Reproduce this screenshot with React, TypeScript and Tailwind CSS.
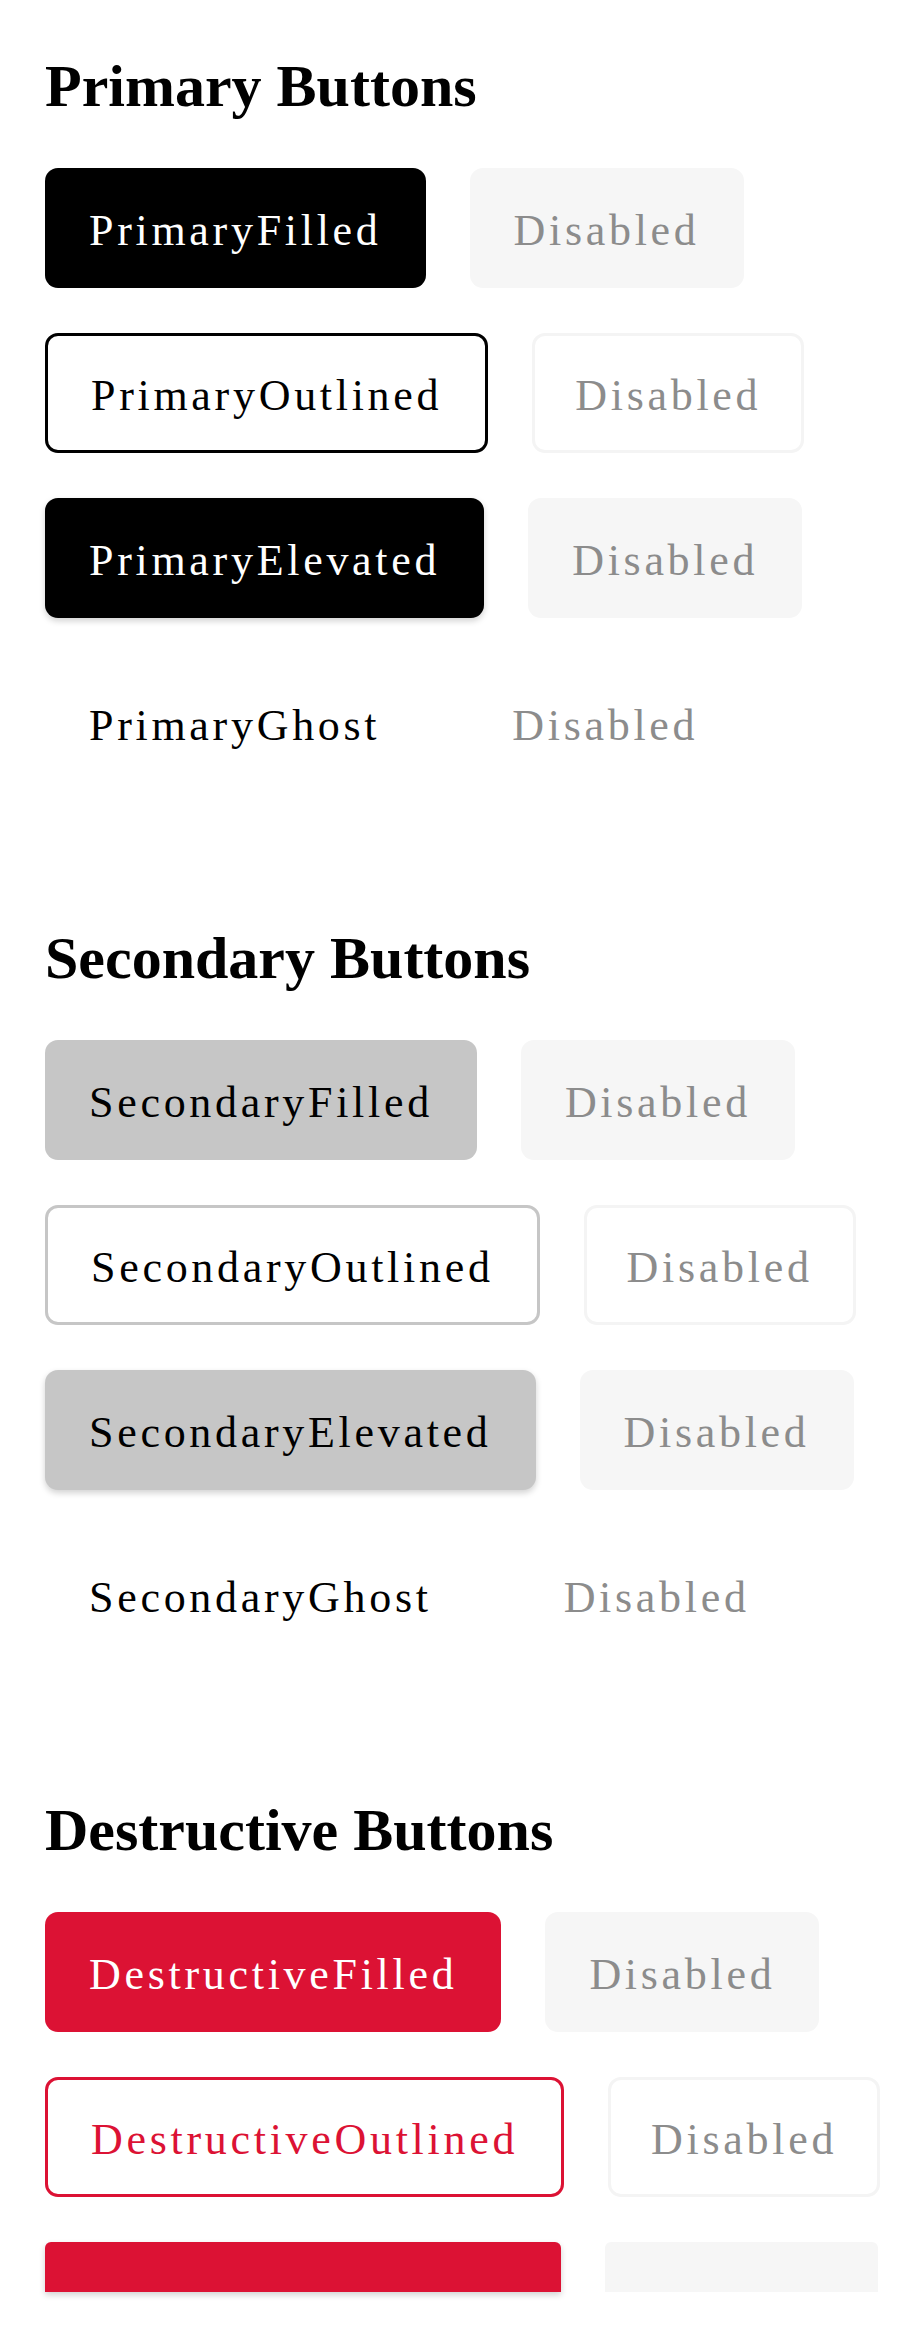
type Variant = 'filled' | 'outlined' | 'elevated' | 'ghost';
type Tone = 'primary' | 'secondary' | 'destructive';

const base =
  "flex items-center rounded-[13px] font-['Liberation_Serif',serif] text-[44px] leading-none tracking-[3.7px] whitespace-nowrap";

const styles: Record<Tone, Record<Variant, string>> = {
  primary: {
    filled: 'bg-black text-white',
    outlined: 'border-[3px] border-black bg-white text-black',
    elevated: 'bg-black text-white shadow-[0_3px_6px_rgba(0,0,0,0.18)]',
    ghost: 'bg-transparent text-black',
  },
  secondary: {
    filled: 'bg-[#c6c6c6] text-black',
    outlined: 'border-[3px] border-[#c6c6c6] bg-white text-black',
    elevated: 'bg-[#c6c6c6] text-black shadow-[0_3px_6px_rgba(0,0,0,0.18)]',
    ghost: 'bg-transparent text-black',
  },
  destructive: {
    filled: 'bg-[#dc1234] text-white',
    outlined: 'border-[3px] border-[#dc1234] bg-white text-[#dc1234]',
    elevated: 'bg-[#dc1234] text-white shadow-[0_3px_6px_rgba(0,0,0,0.18)]',
    ghost: 'bg-transparent text-[#dc1234]',
  },
};

const disabledStyles: Record<Variant, string> = {
  filled: 'bg-[#f6f6f6] text-[#8c8c8c]',
  outlined: 'border-[3px] border-[#f4f4f4] bg-white text-[#8c8c8c]',
  elevated: 'bg-[#f6f6f6] text-[#8c8c8c]',
  ghost: 'bg-transparent text-[#8c8c8c]',
};

const variants: { key: Variant; label: string }[] = [
  { key: 'filled', label: 'Filled' },
  { key: 'outlined', label: 'Outlined' },
  { key: 'elevated', label: 'Elevated' },
  { key: 'ghost', label: 'Ghost' },
];

const sections: { tone: Tone; title: string; prefix: string }[] = [
  { tone: 'primary', title: 'Primary Buttons', prefix: 'Primary' },
  { tone: 'secondary', title: 'Secondary Buttons', prefix: 'Secondary' },
  { tone: 'destructive', title: 'Destructive Buttons', prefix: 'Destructive' },
];

function Btn({ className, children, disabled }: { className: string; children: string; disabled?: boolean }) {
  return (
    <button disabled={disabled} className={`${base} ${className}`}>
      {children}
    </button>
  );
}

export default function App() {
  return (
    <div className="min-h-screen bg-white px-[45px] pt-[56px] pb-[40px]">
      <div className="flex flex-col gap-[145px]">
        {sections.map((section) => {
          const last = section.tone === 'destructive';
          return (
            <section key={section.tone}>
              <h2 className="font-['Liberation_Serif',serif] text-[60px] font-bold leading-none text-black">
                {section.title}
              </h2>
              <div className="mt-[52px] flex flex-col gap-[45px]">
                {variants.map((v) => {
                  // last row of the capture is cut mid-render: bare bars, no labels
                  if (last && v.key === 'ghost') return null;
                  if (last && v.key === 'elevated') {
                    return (
                      <div key={v.key} className="flex gap-[44px]">
                        <div className="h-[50px] w-[516px] rounded-t-[6px] bg-[#dc1234] shadow-[0_3px_6px_rgba(0,0,0,0.18)]" />
                        <div className="h-[50px] w-[273px] rounded-t-[6px] bg-[#f6f6f6]" />
                      </div>
                    );
                  }
                  const outlined = v.key === 'outlined';
                  return (
                    <div key={v.key} className="flex gap-[44px]">
                      <Btn className={`h-[120px] pt-[6px] ${outlined ? 'px-[43px]' : 'px-[44px]'} ${styles[section.tone][v.key]}`}>
                        {section.prefix + v.label}
                      </Btn>
                      <Btn disabled className={`h-[120px] pt-[6px] ${outlined ? 'px-[40px]' : 'px-[44px]'} ${disabledStyles[v.key]}`}>
                        Disabled
                      </Btn>
                    </div>
                  );
                })}
              </div>
            </section>
          );
        })}
      </div>
    </div>
  );
}
